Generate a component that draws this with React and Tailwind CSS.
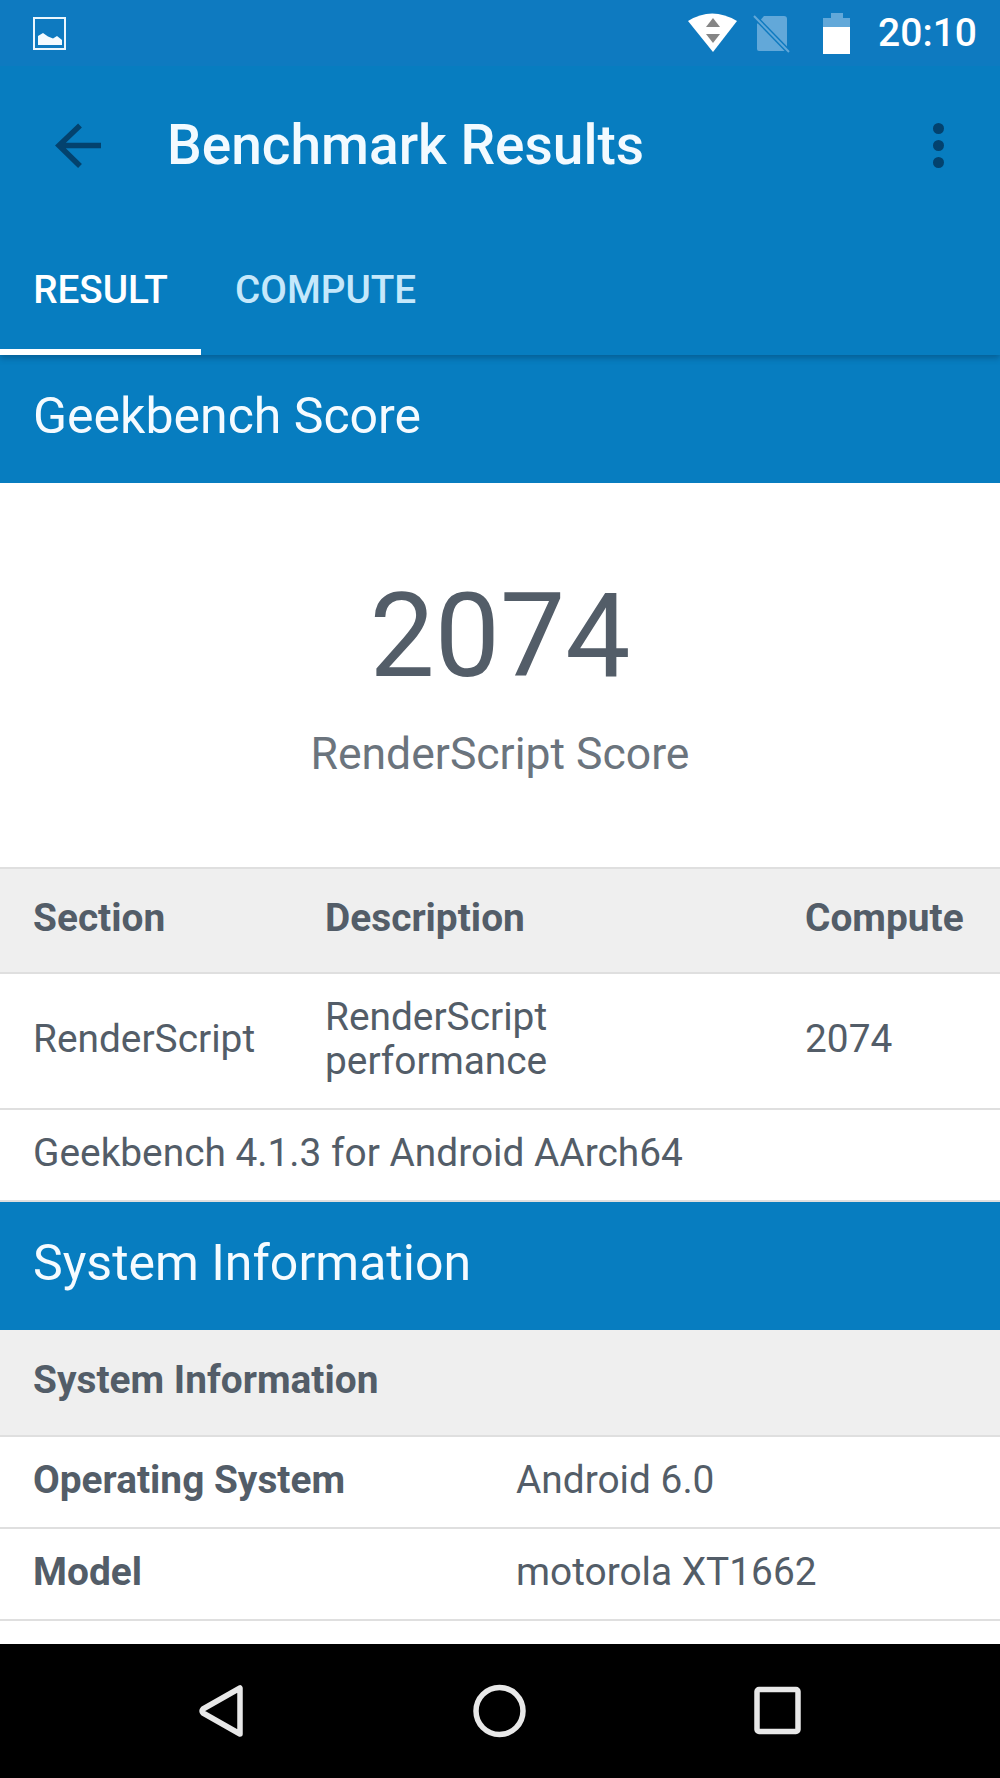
function StatusBar() {
  return (
    <div className="flex h-[66px] items-center bg-[#0e7ac0] pl-[33px] pr-[23px]">
      <svg width="33" height="33" viewBox="0 0 33 33">
        <rect x="1" y="1" width="31" height="31" fill="none" stroke="#eaf6fd" strokeWidth="2" />
        <path d="M5 28V19L10 16L15 19.500L20 21.500L24 19L29 23V28Z" fill="#f4fbff" />
      </svg>
      <div className="flex-1" />
      <svg width="50" height="40" viewBox="0 0 50 40" className="mr-[15px]">
        <path d="M0 8Q24 -7 49 8L25 39Z" fill="#fff" />
        <path d="M25 5L32 14H18Z" fill="#858585" />
        <path d="M18 21H32L25 30Z" fill="#858585" />
      </svg>
      <svg width="38" height="38" viewBox="0 0 38 38" className="mr-[32px] mt-[2px]">
        <path d="M4 9L11 1H31Q34 1 34 4V34Q34 36 32 36H6Q4 36 4 34Z" fill="#62a8d9" />
        <path d="M1 1L36 37" stroke="#0e7ac0" strokeWidth="5" />
        <path d="M1 1L36 37" stroke="#62a8d9" strokeWidth="2" />
      </svg>
      <svg width="28" height="41" viewBox="0 0 28 41" className="mr-[27px]">
        <path d="M0 5H8V0H20V5H27V16H0Z" fill="#62a8d9" />
        <rect x="0" y="14" width="27" height="27" fill="#fff" />
      </svg>
      <span className="text-[39px] leading-none font-medium text-white">20:10</span>
    </div>
  );
}

function Toolbar() {
  return (
    <div className="flex h-[159px] items-center pl-[55px] pr-[56px]">
      <svg width="46" height="46" viewBox="0 0 46 46">
        <path d="M46 22.500H5M25 2.500L4 22.500L25 43" fill="none" stroke="#03426e" strokeWidth="5.500" />
      </svg>
      <h1 className="ml-[66px] flex-1 text-[55px] font-medium leading-none text-[#f2faff]">Benchmark Results</h1>
      <div className="flex flex-col gap-[6px]">
        <span className="h-[11px] w-[11px] rounded-full bg-[#03426e]" />
        <span className="h-[11px] w-[11px] rounded-full bg-[#03426e]" />
        <span className="h-[11px] w-[11px] rounded-full bg-[#03426e]" />
      </div>
    </div>
  );
}

function Tabs() {
  return (
    <div className="flex h-[130px]">
      <div className="flex w-[201px] items-center justify-center border-b-[6px] border-white pt-[6px] text-[38.700px] font-medium leading-none text-white">RESULT</div>
      <div className="flex items-center pl-[34px] text-[38.700px] font-medium leading-none text-[#c5e8fb]">COMPUTE</div>
    </div>
  );
}

function Band({ title }) {
  return (
    <div className="flex h-[128px] items-center bg-[#077dc0] px-[33px] pb-[6px] text-[50px] leading-none text-[#f5fbff]">
      {title}
    </div>
  );
}

function InfoRow({ label, value }) {
  return (
    <div className="flex h-[92px] items-center border-b-2 border-[#dfdfdf] bg-white pb-[4px] pl-[33px]">
      <div className="w-[483px] font-bold">{label}</div>
      <div>{value}</div>
    </div>
  );
}

function NavBar() {
  return (
    <div className="h-[134px] bg-black">
      <svg width="1000" height="134" viewBox="0 0 1000 134">
        <path d="M240 44V90L203 69Q201 67 203 65L240 44Z" fill="none" stroke="#e8e8e8" strokeWidth="5.500" strokeLinejoin="round" />
        <circle cx="499.500" cy="67" r="23.500" fill="none" stroke="#e8e8e8" strokeWidth="5.500" />
        <rect x="757" y="45.500" width="41" height="42" rx="2" fill="none" stroke="#e8e8e8" strokeWidth="5.500" />
      </svg>
    </div>
  );
}

export default function App() {
  return (
    <div className="flex h-[1778px] w-[1000px] flex-col overflow-hidden bg-white text-[38.850px] leading-none text-[#535d68] [font-family:Roboto,sans-serif]">
      <div className="relative z-10 bg-[#077dc0] shadow-[0_3px_6px_rgba(0,40,70,0.35)]">
        <StatusBar />
        <Toolbar />
        <Tabs />
      </div>
      <Band title="Geekbench Score" />
      <div className="flex h-[384px] flex-col items-center pt-[95px]">
        <div className="text-[116px] leading-none">2074</div>
        <div className="mt-[38px] text-[44.500px] leading-none text-[#6b747d]">RenderScript Score</div>
      </div>
      <div className="flex h-[107px] items-center border-y-2 border-[#dfdfdf] bg-[#efefef] pb-[5px] pl-[33px] font-bold">
        <div className="w-[292px]">Section</div>
        <div className="w-[480px]">Description</div>
        <div>Compute</div>
      </div>
      <div className="flex h-[136px] items-center border-b-2 border-[#dfdfdf] pb-[4px] pl-[33px]">
        <div className="w-[292px]">RenderScript</div>
        <div className="w-[480px] leading-[44.500px]">RenderScript<br />performance</div>
        <div>2074</div>
      </div>
      <div className="flex h-[92px] items-center border-b-2 border-[#dfdfdf] pb-[4px] pl-[33px]">Geekbench 4.1.3 for Android AArch64</div>
      <Band title="System Information" />
      <div className="flex h-[107px] items-center border-b-2 border-[#dfdfdf] bg-[#efefef] pb-[4px] pl-[33px] font-bold">System Information</div>
      <InfoRow label="Operating System" value="Android 6.0" />
      <InfoRow label="Model" value="motorola XT1662" />
      <div className="flex-1" />
      <NavBar />
    </div>
  );
}
